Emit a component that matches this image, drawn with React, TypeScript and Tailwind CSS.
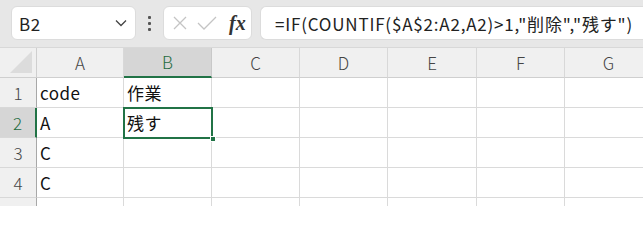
import React from "react";

const cols = ["A", "B", "C", "D", "E", "F", "G"];
const widths = [87, 88, 88, 88, 89, 88, 88];
const rows: string[][] = [
  ["code", "作業", "", "", "", "", ""],
  ["A", "残す", "", "", "", "", ""],
  ["C", "", "", "", "", "", ""],
  ["C", "", "", "", "", "", ""],
  ["", "", "", "", "", "", ""],
];

export default function App() {
  const font = { fontFamily: '"Noto Sans CJK JP","Noto Sans",sans-serif' };
  return (
    <div className="w-[643px] h-[206px] overflow-hidden bg-white relative" style={font}>
      {/* toolbar */}
      <div className="h-[48px] bg-[#e7e7e7] flex items-start pt-[6px] border-b border-[#d8d8d8]">
        <div className="ml-[11px] w-[125px] h-[34px] bg-white rounded-[6px] border border-[#dcdcdc] flex items-center justify-between pl-[7px] pr-[8px]">
          <span className="text-[17px] text-[#222] leading-none tracking-[0.6px]">B2</span>
          <svg width="12" height="8" viewBox="0 0 12 8"><path d="M1 1.5 L6 6.5 L11 1.5" fill="none" stroke="#444" strokeWidth="1.3" /></svg>
        </div>
        <div className="w-[27px] h-[34px] flex flex-col items-center justify-center gap-[3px]">
          <div className="w-[3px] h-[3px] bg-[#555] rounded-[1px]" />
          <div className="w-[3px] h-[3px] bg-[#555] rounded-[1px]" />
          <div className="w-[3px] h-[3px] bg-[#555] rounded-[1px]" />
        </div>
        <div className="w-[89px] h-[34px] bg-white rounded-[6px] border border-[#dcdcdc] flex items-center pl-[9px]">
          <svg width="14" height="14" viewBox="0 0 14 14"><path d="M1 1 L13 13 M13 1 L1 13" stroke="#c4c4c4" strokeWidth="1.3" /></svg>
          <svg className="ml-[10px]" width="20" height="14" viewBox="0 0 20 14"><path d="M1 7 L7 13 L19 1" fill="none" stroke="#c4c4c4" strokeWidth="1.3" /></svg>
          <span className="ml-[12px] text-[20px] italic font-bold text-[#333] leading-none" style={{ fontFamily: '"Liberation Serif",serif' }}>fx</span>
        </div>
        <div className="ml-[8px] flex-1 h-[34px] bg-white rounded-l-[6px] border border-r-0 border-[#dcdcdc] flex items-center pl-[14px] whitespace-nowrap">
          <span className="text-[17px] text-[#222] leading-none tracking-[0.8px]">=IF(COUNTIF($A$2:A2,A2)&gt;1,"削除","残す")</span>
        </div>
      </div>
      {/* grid */}
      <div className="flex flex-col">
        <div className="flex h-[30px]">
          <div className="w-[37px] shrink-0 bg-[#f0f0f0] border-r border-b border-[#cfcfcf] relative">
            <svg className="absolute right-[4px] bottom-[4px]" width="22" height="22" viewBox="0 0 22 22"><path d="M22 0 L22 22 L0 22 Z" fill="#dcdcdc" /></svg>
          </div>
          {cols.map((c, i) => (
            <div
              key={c}
              style={{ width: widths[i] }}
              className={
                "shrink-0 flex items-center justify-center text-[17px] font-light border-r " +
                (c === "B"
                  ? "bg-[#d6d6d6] text-[#1e6b41] border-[#c8c8c8] border-b-2 border-b-[#217346]"
                  : "bg-[#f0f0f0] text-[#444] border-[#d8d8d8] border-b border-b-[#cfcfcf]")
              }
            >
              {c}
            </div>
          ))}
        </div>
        {rows.map((r, ri) => (
          <div key={ri} className="flex h-[30px] shrink-0">
            <div
              className={
                "w-[37px] shrink-0 flex items-center justify-center text-[17px] font-light border-b border-[#d8d8d8] " +
                (ri === 1
                  ? "bg-[#d6d6d6] text-[#1e6b41] border-r-2 border-r-[#217346]"
                  : "bg-[#f0f0f0] text-[#444] border-r border-r-[#a8a8a8]")
              }
            >
              {ri + 1}
            </div>
            {r.map((v, ci) => (
              <div
                key={ci}
                style={{ width: widths[ci] }}
                className="shrink-0 border-r border-b border-[#dadada] flex items-end pb-[2px] pl-[3px] text-[17px] leading-[24px] tracking-[0.5px] text-[#111]"
              >
                {v}
              </div>
            ))}
          </div>
        ))}
      </div>
      {/* selection */}
      <div className="absolute left-[123px] top-[107px] w-[90px] h-[32px] border-2 border-[#217346]">
        <div className="absolute right-[-5px] bottom-[-5px] w-[6px] h-[6px] bg-[#217346] border border-white" />
      </div>
    </div>
  );
}
